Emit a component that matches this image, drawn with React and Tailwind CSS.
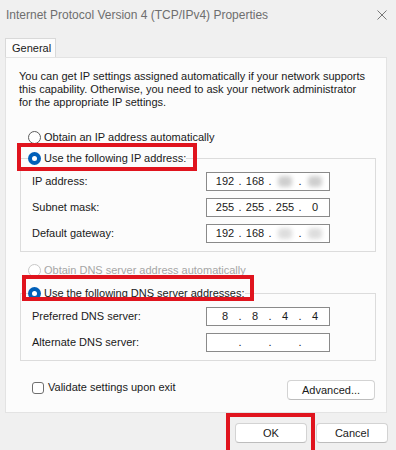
import React from 'react';

const font = { fontFamily: '"Liberation Sans", Arial, sans-serif' };

const Radio = ({ checked, disabled }) => {
    if (checked) {
        return (
            <span className="w-[13px] h-[13px] rounded-full bg-[#005fb8] flex items-center justify-center shrink-0">
                <span className="w-[5px] h-[5px] rounded-full bg-white" />
            </span>
        );
    }
    return (
        <span className={`w-[13px] h-[13px] rounded-full border bg-white shrink-0 ${disabled ? 'border-[#c8c8c8]' : 'border-[#5c5c5c]'}`} />
    );
};

const Blur = ({ light }) => (
    <span className={`w-[14px] h-[11px] rounded-sm blur-[2px] ${light ? 'bg-[#dedede]' : 'bg-[#cfcfcf]'}`} />
);

const Octet = ({ children }) => (
    <span className="w-[22px] flex justify-center">{children}</span>
);

const Dot = () => <span className="w-[8px] text-center">.</span>;

const IpBox = ({ parts }) => (
    <div className="w-[124px] h-[19px] border border-[#8a8a8a] bg-white flex items-center pl-[7px] text-[11px] text-[#1a1a1a]">
        <Octet>{parts[0]}</Octet>
        <Dot />
        <Octet>{parts[1]}</Octet>
        <Dot />
        <Octet>{parts[2]}</Octet>
        <Dot />
        <Octet>{parts[3]}</Octet>
    </div>
);

const Row = ({ label, parts }) => (
    <div className="flex items-center h-[19px] pl-[11px]">
        <span className="w-[174px] text-[11px] text-[#1a1a1a]">{label}</span>
        <IpBox parts={parts} />
    </div>
);

const Button = ({ children, className = '' }) => (
    <button className={`h-[20px] bg-white border border-[#d3d3d3] border-b-[#bdbdbd] rounded-[4px] text-[11px] text-[#1a1a1a] flex items-center justify-center ${className}`}>
        {children}
    </button>
);

export default function App() {
    return (
        <div style={font} className="w-[396px] h-[450px] bg-[#f0f0f0] overflow-hidden text-[#1a1a1a]">
            {/* Title bar */}
            <div className="h-[30px] flex items-center justify-between pl-[6px] pr-[9px]">
                <span className="text-[12px] text-[#6e6e6e]">Internet Protocol Version 4 (TCP/IPv4) Properties</span>
                <svg width="10" height="10" viewBox="0 0 10 10" className="text-[#777]">
                    <path d="M0.5 0.5 L9.5 9.5 M9.5 0.5 L0.5 9.5" stroke="currentColor" strokeWidth="1" />
                </svg>
            </div>

            {/* Tab */}
            <div className="pl-[5px] pt-[8px]">
                <div className="w-[51px] h-[19px] bg-[#fcfcfc] border border-b-0 border-[#d9d9d9] flex items-center pl-[6px] text-[11px]">
                    General
                </div>
            </div>

            {/* Panel */}
            <div className="ml-[5px] w-[382px] h-[356px] bg-[#fcfcfc] border border-[#e3e3e3] pl-[14px] pr-[10px] pt-[12px]">
                <p className="-ml-px text-[11px] leading-[13px]">
                    You can get IP settings assigned automatically if your network supports<br />
                    this capability. Otherwise, you need to ask your network administrator<br />
                    for the appropriate IP settings.
                </p>

                <div className="mt-[20px] h-[16px] flex items-center gap-[3px] pl-[8px] text-[11px]">
                    <Radio />
                    <span>Obtain an IP address automatically</span>
                </div>

                <fieldset className="mt-[5px] border border-[#dcdcdc] pb-[8px]">
                    <legend className="ml-[7px] p-0">
                        <span className="relative h-[16px] flex items-center gap-[3px] text-[11px]">
                            <Radio checked />
                            <span>Use the following IP address:</span>
                            <span className="absolute -left-[11px] -right-[11px] -top-[7px] -bottom-[5px] border-[4px] border-[#e0141e]" />
                        </span>
                    </legend>
                    <div className="pt-[6px] flex flex-col gap-[7px]">
                        <Row label="IP address:" parts={['192', '168', <Blur />, <Blur />]} />
                        <Row label="Subnet mask:" parts={['255', '255', '255', '0']} />
                        <Row label="Default gateway:" parts={['192', '168', <Blur light />, <Blur light />]} />
                    </div>
                </fieldset>

                <div className="mt-[10px] h-[16px] flex items-center gap-[3px] pl-[8px] text-[11px] text-[#a6a6a6]">
                    <Radio disabled />
                    <span>Obtain DNS server address automatically</span>
                </div>

                <fieldset className="mt-[7px] border border-[#dcdcdc] pb-[8px]">
                    <legend className="ml-[7px] p-0">
                        <span className="relative h-[16px] flex items-center gap-[3px] text-[11px]">
                            <Radio checked />
                            <span>Use the following DNS server addresses:</span>
                            <span className="absolute -left-[6px] -right-[9px] -top-[10px] bottom-0 border-[4px] border-[#e0141e]" />
                        </span>
                    </legend>
                    <div className="pt-[6px] flex flex-col gap-[7px]">
                        <Row label="Preferred DNS server:" parts={['8', '8', '4', '4']} />
                        <Row label="Alternate DNS server:" parts={['', '', '', '']} />
                    </div>
                </fieldset>

                <div className="mt-[19px] flex justify-between items-start pl-[12px] pr-px">
                    <div className="flex items-center gap-[4px] text-[11px]">
                        <span className="w-[12px] h-[12px] rounded-[3px] border border-[#6f6f6f] bg-white" />
                        <span className="-mt-px">Validate settings upon exit</span>
                    </div>
                    <Button className="w-[88px]">Advanced...</Button>
                </div>
            </div>

            {/* Bottom buttons */}
            <div className="mt-[10px] flex justify-end gap-[9px] pr-[8px]">
                <div className="relative">
                    <Button className="w-[72px]">OK</Button>
                    <span className="absolute -left-[9px] -right-[8px] -top-[10px] -bottom-[12px] border-[4px] border-[#e0141e]" />
                </div>
                <Button className="w-[72px]">Cancel</Button>
            </div>
        </div>
    );
}
